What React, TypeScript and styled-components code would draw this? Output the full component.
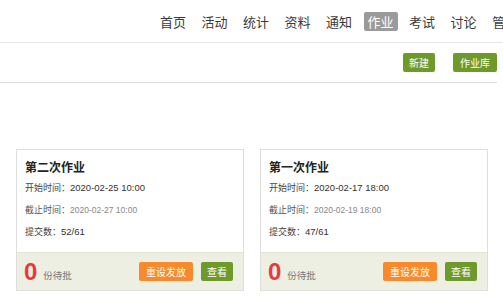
import React from "react";
import styled, { createGlobalStyle } from "styled-components";

const Global = createGlobalStyle`
  html, body { margin: 0; padding: 0; background: #fff; }
  body {
    font-family: "Microsoft YaHei", "Noto Sans CJK SC", "Noto Sans", sans-serif;
    color: #333;
    width: 503px;
    height: 305px;
    overflow: hidden;
  }
`;

const Page = styled.div`
  width: 503px;
  height: 305px;
  overflow: hidden;
`;

const Nav = styled.nav`
  height: 43px;
  border-bottom: 1px solid #e6e6e6;
  display: flex;
  align-items: center;
  gap: 7.5px;
  padding-left: 156px;
  white-space: nowrap;
  overflow: hidden;
  box-sizing: border-box;
`;

const NavItem = styled.span<{ $active?: boolean }>`
  font-size: 13px;
  line-height: 19px;
  height: 19px;
  padding: 0 4px;
  border-radius: 2px;
  background: ${(p) => (p.$active ? "#9a9a9a" : "transparent")};
  color: ${(p) => (p.$active ? "#fff" : "#3a3a3a")};
  flex-shrink: 0;
`;

const Toolbar = styled.div`
  height: 39px;
  margin-right: 6px;
  border-bottom: 1px solid #dcdcdc;
  display: flex;
  justify-content: flex-end;
  align-items: center;
  gap: 18px;
`;

const Btn = styled.button<{ $color: string; $w: number }>`
  width: ${(p) => p.$w}px;
  height: 19px;
  border: none;
  border-radius: 2px;
  background: ${(p) => p.$color};
  color: #fff;
  font-family: inherit;
  font-size: 10px;
  padding: 0;
  line-height: 19px;
  cursor: pointer;
`;

const Cards = styled.div`
  display: flex;
  gap: 16px;
  padding: 66px 0 0 16px;
`;

const Card = styled.div`
  width: 228px;
  height: 142px;
  box-sizing: border-box;
  border: 1px solid #dedede;
  display: flex;
  flex-direction: column;
  background: #fff;
`;

const CardBody = styled.div`
  flex: 1;
  padding: 7px 8px 0 8px;
  display: flex;
  flex-direction: column;
`;

const Title = styled.div`
  font-size: 12px;
  font-weight: bold;
  color: #222;
  line-height: 20px;
  height: 20px;
`;

const Line = styled.div`
  font-size: 9px;
  line-height: 22px;
  height: 22px;
  color: #444;
  display: flex;
  align-items: baseline;
`;

const Label = styled.span<{ $light?: boolean }>`
  color: ${(p) => (p.$light ? "#555" : "#444")};
`;

const Value = styled.span<{ $light?: boolean }>`
  font-size: ${(p) => (p.$light ? "8.5px" : "9.5px")};
  color: ${(p) => (p.$light ? "#888" : "#333")};
  font-family: "Liberation Sans", Arial, sans-serif;
`;

const Footer = styled.div`
  height: 37px;
  background: #edefe2;
  border-top: 1px solid #e2e4d6;
  display: flex;
  align-items: center;
  padding: 0 10px 0 7px;
`;

const Count = styled.span`
  font-family: "Liberation Sans", Arial, sans-serif;
  font-size: 24px;
  font-weight: bold;
  color: #e8393b;
  line-height: 1;
`;

const Pending = styled.span`
  font-size: 9.5px;
  color: #777;
  margin-left: 6px;
  margin-top: 6px;
`;

const Spacer = styled.div`
  flex: 1;
`;

const FooterBtns = styled.div`
  display: flex;
  gap: 8px;
`;

const GREEN = "#6e9a2c";
const ORANGE = "#f88a2c";

const navItems = ["首页", "活动", "统计", "资料", "通知", "作业", "考试", "讨论", "管理"];

const cards = [
  { title: "第二次作业", start: "2020-02-25 10:00", end: "2020-02-27 10:00", count: "52/61" },
  { title: "第一次作业", start: "2020-02-17 18:00", end: "2020-02-19 18:00", count: "47/61" },
];

export default function App() {
  return (
    <Page>
      <Global />
      <Nav>
        {navItems.map((n) => (
          <NavItem key={n} $active={n === "作业"}>
            {n}
          </NavItem>
        ))}
      </Nav>
      <Toolbar>
        <Btn $color={GREEN} $w={32}>新建</Btn>
        <Btn $color={GREEN} $w={44}>作业库</Btn>
      </Toolbar>
      <Cards>
        {cards.map((c) => (
          <Card key={c.title}>
            <CardBody>
              <Title>{c.title}</Title>
              <Line>
                <Label>开始时间：</Label>
                <Value>{c.start}</Value>
              </Line>
              <Line>
                <Label $light>截止时间：</Label>
                <Value $light>{c.end}</Value>
              </Line>
              <Line>
                <Label>提交数：</Label>
                <Value>{c.count}</Value>
              </Line>
            </CardBody>
            <Footer>
              <Count>0</Count>
              <Pending>份待批</Pending>
              <Spacer />
              <FooterBtns>
                <Btn $color={ORANGE} $w={54}>重设发放</Btn>
                <Btn $color={GREEN} $w={32}>查看</Btn>
              </FooterBtns>
            </Footer>
          </Card>
        ))}
      </Cards>
    </Page>
  );
}
